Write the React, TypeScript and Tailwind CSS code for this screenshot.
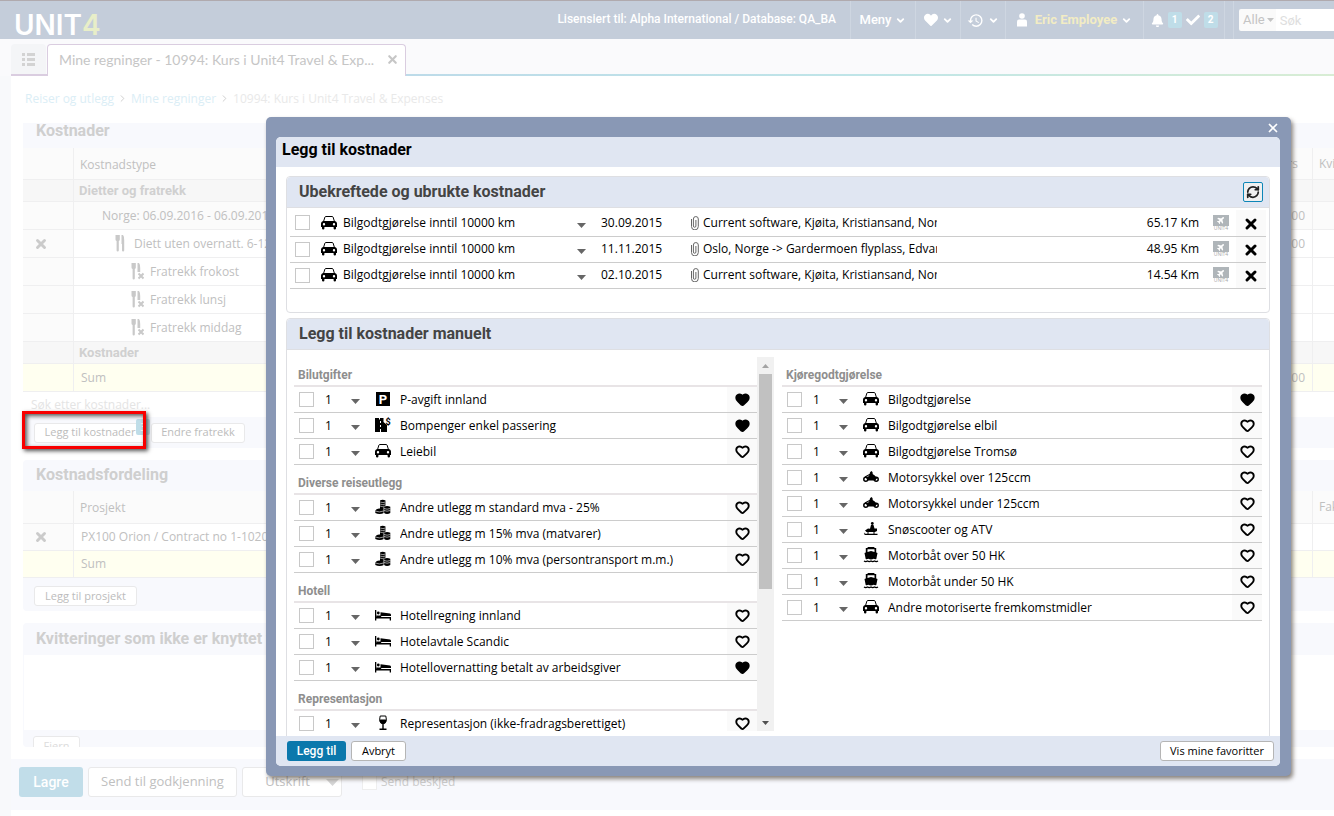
import React from 'react';
import { FaBell, FaCheck, FaHeart, FaPlane } from 'react-icons/fa';
import { MdHistory } from 'react-icons/md';
import { ChevronDown, ChevronRight, Heart, RefreshCw, X } from 'lucide-react';

type IconName = 'car' | 'parking' | 'toll' | 'coins' | 'bed' | 'glass' | 'motorcycle' | 'snow' | 'boat';

type Cost = { name: string; icon: IconName; favorite?: boolean };
type CostGroup = { title: string; items: Cost[] };

const unconfirmed = [
    { type: 'Bilgodtgjørelse inntil 10000 km', date: '30.09.2015', text: 'Current software, Kjøita, Kristiansand, Norge', amount: '65.17 Km' },
    { type: 'Bilgodtgjørelse inntil 10000 km', date: '11.11.2015', text: 'Oslo, Norge -> Gardermoen flyplass, Edvard Munchs veg', amount: '48.95 Km' },
    { type: 'Bilgodtgjørelse inntil 10000 km', date: '02.10.2015', text: 'Current software, Kjøita, Kristiansand, Norge', amount: '14.54 Km' },
];

const leftGroups: CostGroup[] = [
    {
        title: 'Bilutgifter',
        items: [
            { name: 'P-avgift innland', icon: 'parking', favorite: true },
            { name: 'Bompenger enkel passering', icon: 'toll', favorite: true },
            { name: 'Leiebil', icon: 'car' },
        ],
    },
    {
        title: 'Diverse reiseutlegg',
        items: [
            { name: 'Andre utlegg m standard mva - 25%', icon: 'coins' },
            { name: 'Andre utlegg m 15% mva (matvarer)', icon: 'coins' },
            { name: 'Andre utlegg m 10% mva (persontransport m.m.)', icon: 'coins' },
        ],
    },
    {
        title: 'Hotell',
        items: [
            { name: 'Hotellregning innland', icon: 'bed' },
            { name: 'Hotelavtale Scandic', icon: 'bed' },
            { name: 'Hotellovernatting betalt av arbeidsgiver', icon: 'bed', favorite: true },
        ],
    },
    {
        title: 'Representasjon',
        items: [{ name: 'Representasjon (ikke-fradragsberettiget)', icon: 'glass' }],
    },
];

const rightGroups: CostGroup[] = [
    {
        title: 'Kjøregodtgjørelse',
        items: [
            { name: 'Bilgodtgjørelse', icon: 'car', favorite: true },
            { name: 'Bilgodtgjørelse elbil', icon: 'car' },
            { name: 'Bilgodtgjørelse Tromsø', icon: 'car' },
            { name: 'Motorsykkel over 125ccm', icon: 'motorcycle' },
            { name: 'Motorsykkel under 125ccm', icon: 'motorcycle' },
            { name: 'Snøscooter og ATV', icon: 'snow' },
            { name: 'Motorbåt over 50 HK', icon: 'boat' },
            { name: 'Motorbåt under 50 HK', icon: 'boat' },
            { name: 'Andre motoriserte fremkomstmidler', icon: 'car' },
        ],
    },
];

function CostIcon({ name }: { name: IconName }) {
    return (
        <svg viewBox="0 0 16 16" className="size-4 shrink-0" fill="currentColor" aria-hidden="true">
            {name === 'car' && (
                <>
                    <path d="M2.400 7 3.900 2.100Q4.200 1.500 5 1.500h6q.8 0 1.100.6L13.600 7" fill="none" stroke="currentColor" />
                    <path fillRule="evenodd" d="M2 6h12q2 .6 2 2.400v3.600h-1v1.500q0 1-1.200 1T12.600 13.500V12H3.400v1.500q0 1-1.200 1T1 13.500V12H0V8.400Q0 6.600 2 6ZM3 8a1.200 1.200 0 1 0 0 2.400A1.200 1.200 0 0 0 3 8Zm10 0a1.200 1.200 0 1 0 0 2.400A1.200 1.200 0 0 0 13 8Z" />
                </>
            )}
            {name === 'parking' && (
                <>
                    <rect x="1" y="1" width="14" height="14" />
                    <text x="8" y="12.500" textAnchor="middle" fill="#fff" fontSize="13" fontWeight="700" fontFamily="Roboto, sans-serif">P</text>
                </>
            )}
            {name === 'toll' && (
                <>
                    <path d="M0 1h4v1.500h1V1h3.500v4L12 8v7H6v-3H5v3H0ZM5 4v2h1V4Zm0 4v2h1V8Z" fillRule="evenodd" />
                    <text x="13" y="8" textAnchor="middle" fontSize="9" fontWeight="700" fontFamily="Roboto, sans-serif">$</text>
                </>
            )}
            {name === 'coins' && (
                <>
                    <path d="M5 1.500q2.500-1.500 5.500 0v5L9 8v6Q4.500 16 .3 14v-2.500Q2 9 5 9.500Z" />
                    <path d="M9 7.800q3-1.600 6.300 0V14q-3.300 1.800-6.300 0Z" />
                    <path d="M5 3q3 1.200 5.500 0M5 5q2.500 1.200 5.500 0M5 7q2.500 1.200 4.500 0M.3 12q4 1.800 8.300 0M9 9.500q3 1.400 6.300 0M9 11.500q3 1.400 6.300 0M8.800 8v7" stroke="#fff" strokeWidth=".6" fill="none" />
                </>
            )}
            {name === 'bed' && (
                <>
                    <path d="M0 3h1.300v7H16v3.500h-1.300v-2H1.300v2H0ZM5.500 5.200 15 6.500q1 .3 1 1.500v1H5.500Z" />
                    <path d="M1.200 8.500h5v1.500h-5z" />
                    <circle cx="3.300" cy="6" r="1.400" />
                </>
            )}
            {name === 'glass' && (
                <>
                    <path d="M5.200 1h5.600q1.200 4-.1 6-1 1.500-2.700 1.500T5.300 7Q4 5 5.200 1Z" fill="none" stroke="currentColor" />
                    <path d="M4.500 4.500h7Q11.500 9 8 9T4.500 4.500ZM7.300 8h1.400v6H7.300ZM4.500 13.500h7V15h-7Z" />
                </>
            )}
            {name === 'motorcycle' && (
                <>
                    <path d="M7 3.500 8.200 2 9.500 3l.3 2.500 1.800 1 .4 1.500 1.500 1-1 2.500H4.500L3 8.500l3-1.500Z" />
                    <path d="M2 8 6.500 5.500 10 6l4 3.500" stroke="currentColor" strokeWidth="1.200" fill="none" />
                    <circle cx="2.800" cy="10.300" r="2" fill="none" stroke="currentColor" strokeWidth="1.500" />
                    <circle cx="13.200" cy="10.300" r="2" fill="none" stroke="currentColor" strokeWidth="1.500" />
                </>
            )}
            {name === 'snow' && (
                <>
                    <circle cx="9.300" cy="2.500" r="1.400" />
                    <path d="M8 4h2.500l1 3.500h2.500V10l-2 1H3.500L2 9.500 5 7.500l2 .3Z" />
                    <path d="M1 11.200q0 1.500 2 1.500h11.500V14H3Q.5 14 1 11.200Z" />
                    <path d="M5 10.500v2.500M11 10.500v2.500" stroke="currentColor" />
                </>
            )}
            {name === 'boat' && (
                <>
                    <path fillRule="evenodd" d="M5 0h6l.8 1h1.400v4.500l1.300.5-1.200 6q-1.300.6-2.600-.2-2.700 1.400-5.400 0-1.300.8-2.600.2L1.500 6l1.300-.5V1h1.400ZM4.500 2.200V5L8 4l3.500 1V2.200Z" />
                    <path d="M1 14q1.700 1.200 3.500 0 1.700 1.200 3.500 0 1.700 1.200 3.500 0 1.700 1.200 3.500 0" fill="none" stroke="currentColor" strokeWidth="1.300" />
                </>
            )}
        </svg>
    );
}

function Caret({ className = 'w-[9px] h-[5px]' }: { className?: string }) {
    return (
        <svg viewBox="0 0 10 5" preserveAspectRatio="none" className={className} aria-hidden="true">
            <path d="M0 0h10L5 5Z" fill="currentColor" />
        </svg>
    );
}

function Checkbox({ label, className = 'border-[#c8c8c8]' }: { label: string; className?: string }) {
    return <input type="checkbox" aria-label={label} className={`block shrink-0 appearance-none size-[15px] border bg-white ${className}`} />;
}

function CostRow({ cost }: { cost: Cost }) {
    return (
        <li className="flex h-[26px] items-center border-b border-[#ccc] pl-[5px]">
            <Checkbox label={cost.name} />
            <div className="relative ml-2 flex h-full w-10 items-center">
                <select aria-label={`Antall ${cost.name}`} className="w-full appearance-none bg-transparent pl-[3px] outline-none">
                    <option>1</option>
                    <option>2</option>
                    <option>3</option>
                </select>
                <Caret className="pointer-events-none absolute right-[2px] bottom-2 h-[5px] w-[9px] text-[#666]" />
            </div>
            <span className="ml-[13px] flex w-4 justify-center pb-[2px]"><CostIcon name={cost.icon} /></span>
            <span className="ml-[9px] grow truncate">{cost.name}</span>
            <button aria-label={`Favoritt ${cost.name}`} className="flex h-full w-[30px] shrink-0 items-center justify-center bg-[#fafafa]">
                <Heart className="size-[15px]" strokeWidth={3} fill={cost.favorite ? 'currentColor' : 'none'} />
            </button>
        </li>
    );
}

function CostList({ groups }: { groups: CostGroup[] }) {
    return (
        <>
            {groups.map((group) => (
                <section key={group.title}>
                    <h3 className="flex h-[30px] items-center border-b-2 border-[#e8e4e6] pt-2 pl-1 font-['Roboto'] text-[12px] font-bold text-[#8e8e8e]">{group.title}</h3>
                    <ul>
                        {group.items.map((cost) => <CostRow key={cost.name} cost={cost} />)}
                    </ul>
                </section>
            ))}
        </>
    );
}

function TopBar() {
    const item = 'flex items-center justify-center gap-1 border-l border-[#ced6e1]';
    return (
        <header className="flex h-[39px] shrink-0 border-t border-[#b0aaae] bg-[#c4cdda] font-['Roboto'] text-[13px] text-white">
            <a href="#" className="flex items-center pt-[9px] pl-[14px] font-['Inter'] text-[28px] leading-none font-semibold">
                UNIT<span className="text-[#e8eec8]">4</span>
            </a>
            <p className="ml-auto pt-[9px] pr-[14px] text-[12px] leading-[18px] font-medium whitespace-nowrap">
                Lisensiert til: Alpha International / Database: QA_BA
            </p>
            <button className={`${item} w-[65px] font-medium`}>Meny <ChevronDown className="size-[11px]" strokeWidth={4} /></button>
            <button aria-label="Favoritter" className={`${item} w-[45px]`}><FaHeart className="size-[14px]" /><ChevronDown className="size-[11px]" strokeWidth={4} /></button>
            <button aria-label="Historikk" className={`${item} w-[45px]`}><MdHistory className="size-[17px]" /><ChevronDown className="size-[11px]" strokeWidth={4} /></button>
            <button className={`${item} w-[138px]`}>
                <svg viewBox="0 0 10 14" className="mr-1 h-[14px] w-[10px]" fill="currentColor"><circle cx="5" cy="3" r="2.800" /><path d="M0 13.500V8.500q0-2 2-2h6q2 0 2 2v5Z" /></svg>
                <span className="font-bold text-[#f2ecc4]">Eric Employee</span>
                <ChevronDown className="size-[11px]" strokeWidth={4} />
            </button>
            <div className={`${item} w-[81px]`}>
                <FaBell className="size-[13px]" />
                <span className="h-4 w-[14px] rounded-xs bg-[#bfdde8] text-center text-[10px] leading-4 font-bold">1</span>
                <FaCheck className="size-[14px]" />
                <span className="h-4 w-[14px] rounded-xs bg-[#bfdde8] text-center text-[10px] leading-4 font-bold">2</span>
            </div>
            <div className="w-[9px] border-l border-[#ced6e1]" />
            <div className="flex w-[101px] items-center border-l border-[#ced6e1] pl-[5px]">
                <button className="flex h-[22px] items-center gap-[2px] rounded-l-xs bg-[#fafafa] pr-[2px] pl-1 text-[#c4c4c4]">Alle<Caret className="h-1 w-[7px]" /></button>
                <input aria-label="Søk" placeholder="Søk" className="h-[22px] w-full min-w-0 bg-white pl-1 outline-none placeholder:text-[#dedede]" />
            </div>
        </header>
    );
}

function FoodIcon({ removed = false }: { removed?: boolean }) {
    return (
        <svg viewBox="0 0 13 17" className="h-[17px] w-[13px] shrink-0 text-[#c9c9c9]" fill="currentColor" aria-hidden="true">
            <path d="M.5 0h4.300v4.500q0 1.200-1 1.500v9.500q0 1-1.100 1t-1.100-1V6Q.5 5.700.5 4.500Z" />
            <path d={removed ? 'M6.500 0H8q1.200 1 1.200 5v4H6.500Z' : 'M6.500 0H8q1.200 1 1.200 5v10.500q0 1-1.100 1t-1.100-1V9h-.5Z'} />
            {removed && <path d="m7.500 10.500 5 5m0-5-5 5" stroke="currentColor" strokeWidth="2" />}
        </svg>
    );
}

const cell = 'border-b border-[#efeff0] p-0';
const smallButton = 'rounded-[3px] border border-[#e9e9ea] bg-white text-[11px] text-[#bcbcbc] whitespace-nowrap';
const pageHeading = "pl-[13px] font-['Roboto'] text-[16px] font-bold text-[#cfcfcf]";

type LineProps = {
    first?: React.ReactNode;
    children: React.ReactNode;
    amount?: React.ReactNode;
    last?: string;
    height?: string;
    bg?: string;
    lead?: string;
};

function Line({ first, children, amount, last, height = 'h-[28px]', bg = 'bg-white', lead = 'bg-[#fbfbfb]' }: LineProps) {
    return (
        <tr className={`${height} ${bg}`}>
            <td className={`${cell} border-r ${lead}`}>{first}</td>
            <td className={`${cell} border-r whitespace-nowrap`}>{children}</td>
            <td className={`${cell} border-r pr-[7px] text-right`}>{amount}</td>
            <td className={`${cell} overflow-hidden pl-[6px] whitespace-nowrap`}>{last}</td>
        </tr>
    );
}

function Cols() {
    return (
        <colgroup>
            <col className="w-[51px]" />
            <col />
            <col className="w-[60px]" />
            <col className="w-[21px]" />
        </colgroup>
    );
}

const removeIcon = <X className="ml-[11px] size-[14px] text-[#cbcbcb]" strokeWidth={5} />;
const crumbIcon = <ChevronRight className="size-[11px] text-[#ccc]" strokeWidth={2} />;

function ExpensePage() {
    return (
        <main className="ml-[11px] flex grow flex-col bg-white text-[12px] text-[#c0c0c0]">
            <nav className="flex h-[47px] items-center gap-[3px] pb-[2px] pl-[14px] text-[#dbeef6]">
                <a href="#">Reiser og utlegg</a>
                {crumbIcon}
                <a href="#">Mine regninger</a>
                {crumbIcon}
                <span className="text-[#e9e9e9]">10994: Kurs i Unit4 Travel &amp; Expenses</span>
            </nav>
            <section className="ml-3 bg-[#f8f9fd]">
                <h2 className={`h-[25px] leading-[16px] ${pageHeading}`}>Kostnader</h2>
                <table className="w-full table-fixed border-separate border-spacing-0">
                    <Cols />
                    <tbody>
                        <Line height="h-[32px]" bg="bg-[#fbfbfb]" amount={<span className="pr-[7px]">Kurs</span>} last="Kvittering"><span className="block pt-[2px] pl-[6px]">Kostnadstype</span></Line>
                        <Line height="h-[22px]" bg="bg-[#f7f7f7]" lead=""><b className="pl-[5px] font-['Roboto'] text-[13px] text-[#d0d0d0]">Dietter og fratrekk</b></Line>
                        <Line bg="bg-[#fbfbfb]" amount="0.00"><span className="pl-7">Norge: 06.09.2016 - 06.09.2016</span></Line>
                        <Line first={removeIcon} amount="0.00"><span className="flex items-center gap-[6px] pl-[41px]"><FoodIcon />Diett uten overnatt. 6-12 t</span></Line>
                        <Line><span className="flex items-center gap-[6px] pl-[57px]"><FoodIcon removed />Fratrekk frokost</span></Line>
                        <Line><span className="flex items-center gap-[6px] pl-[57px]"><FoodIcon removed />Fratrekk lunsj</span></Line>
                        <Line><span className="flex items-center gap-[6px] pl-[57px]"><FoodIcon removed />Fratrekk middag</span></Line>
                        <Line height="h-[22px]" bg="bg-[#f7f7f7]" lead=""><b className="pl-[5px] font-['Roboto'] text-[13px] text-[#d0d0d0]">Kostnader</b></Line>
                        <Line bg="bg-[#fffff0]" lead="" amount="0.00"><span className="pl-[7px]">Sum</span></Line>
                    </tbody>
                </table>
                <input aria-label="Søk etter kostnader" placeholder="Søk etter kostnader..." className="block h-[25px] w-full bg-white pl-2 outline-none placeholder:text-[#e4e4e4]" />
                <div className="flex h-[31px] items-center gap-[5px] pl-[11px]">
                    <div className="relative">
                        <button className={`${smallButton} block h-5 w-[112px]`}>Legg til kostnader</button>
                        <span className="absolute -top-1 -right-1 h-4 w-[14px] rounded-xs bg-[#bfdde8] text-center text-[10px] leading-4 text-white">3</span>
                        <div className="pointer-events-none absolute -top-3 -left-3 h-[38px] w-[124px] border-[3px] border-[#f80000] shadow-[2px_2px_4px_#555,inset_2px_2px_4px_#555]" />
                    </div>
                    <button className={`${smallButton} h-5 w-[94px]`}>Endre fratrekk</button>
                </div>
            </section>
            <section className="mt-3 ml-3 rounded-l-sm bg-[#f8f9fd]">
                <h2 className={`h-[31px] leading-[30px] ${pageHeading}`}>Kostnadsfordeling</h2>
                <table className="w-full table-fixed border-separate border-spacing-0">
                    <Cols />
                    <tbody>
                        <Line height="h-[33px]" bg="bg-[#fbfbfb]" last="Faktor"><span className="block pt-[2px] pl-[6px]">Prosjekt</span></Line>
                        <Line height="h-[27px]" first={removeIcon}><span className="pl-[7px]">PX100 Orion / Contract no 1-1020</span></Line>
                        <Line height="h-[27px]" bg="bg-[#fffff0]" lead=""><span className="pl-[7px]">Sum</span></Line>
                    </tbody>
                </table>
                <div className="h-[33px] pt-2 pl-[11px]">
                    <button className={`${smallButton} block h-5 w-[103px]`}>Legg til prosjekt</button>
                </div>
            </section>
            <section className="mt-3 ml-3 h-[124px] overflow-hidden rounded-l-sm bg-[#f8f9fd]">
                <h2 className={`h-[32px] leading-[31px] ${pageHeading}`}>Kvitteringer som ikke er knyttet til en kostnad</h2>
                <div className="ml-px h-[75px] bg-white" />
                <div className="pt-[6px] pl-[10px]">
                    <button className={`${smallButton} block h-5 w-[47px] text-[#dcdcdc]`}>Fjern</button>
                </div>
            </section>
            <footer className="mt-3 mb-[6px] flex h-[51px] items-start gap-[5px] bg-[#f8f9fd] pt-2 pl-2 text-[13px]">
                <button className="h-[30px] w-[64px] rounded-[3px] bg-[#c1dde9] font-['Roboto'] text-[14px] font-medium text-white">Lagre</button>
                <button className="h-[30px] w-[149px] rounded-[3px] border border-[#e9e9ea] bg-white">Send til godkjenning</button>
                <button className="flex h-[30px] w-[100px] items-center justify-end gap-4 rounded-[3px] border border-[#e9e9ea] bg-white pr-[2px]">Utskrift<Caret className="h-[7px] w-[13px] text-[#d5d5d5]" /></button>
                <label className="ml-[15px] flex h-[30px] items-center gap-1 text-[12px] text-[#ccc]"><Checkbox label="Send beskjed" className="border-[#eee]" />Send beskjed</label>
            </footer>
        </main>
    );
}

function AddCostsDialog() {
    return (
        <div role="dialog" aria-labelledby="dialog-title" className="absolute top-[117px] right-[43px] left-[266px] flex h-[659px] flex-col rounded-[5px] bg-[#8998b5] pr-[11px] pb-[10px] pl-[10px] text-[12px] text-black shadow-[2px_3px_4px_rgba(80,70,60,0.65)]">
            <div className="flex h-5 shrink-0 items-center justify-end">
                <button aria-label="Lukk" className="pt-px text-white"><X className="size-[14px]" strokeWidth={3} /></button>
            </div>
            <div className="flex grow flex-col overflow-hidden rounded-[5px] bg-white">
                <h1 id="dialog-title" className="h-[30px] shrink-0 bg-[#e0e6f2] pl-[6px] font-['Roboto'] text-[16px] leading-[25px] font-bold">Legg til kostnader</h1>
                <div className="flex h-[569px] flex-col gap-[5px] overflow-hidden px-[10px] pt-[9px]">
                    <section className="h-[137px] shrink-0 rounded-[4px] border border-[#dedfe3]">
                        <div className="flex h-[31px] items-center justify-between rounded-t-[4px] border-b border-[#dedfe3] bg-[#e0e6f2] pr-[6px] pl-3">
                            <h2 className="pb-px font-['Roboto'] text-[16px] leading-none font-bold text-[#444]">Ubekreftede og ubrukte kostnader</h2>
                            <button aria-label="Oppdater" className="flex size-5 items-center justify-center rounded-xs border border-[#0d86b8] bg-[#f0f0f0] text-[#222]"><RefreshCw className="size-[14px]" strokeWidth={3} /></button>
                        </div>
                        <div className="px-[3px] pt-[2px]">
                            <table className="w-full table-fixed border-collapse">
                                <colgroup>
                                    <col className="w-[26px]" />
                                    <col className="w-[276px]" />
                                    <col className="w-[85px]" />
                                    <col className="w-[261px]" />
                                    <col />
                                    <col className="w-[37px]" />
                                    <col className="w-[30px]" />
                                </colgroup>
                                <tbody>
                                    {unconfirmed.map((row) => (
                                        <tr key={row.date} className="h-[26px] border-b border-[#ccc]">
                                            <td className="p-0 pl-[5px]"><Checkbox label={`Velg ${row.date}`} /></td>
                                            <td className="p-0 pl-[5px]">
                                                <div className="relative flex items-center gap-[6px]">
                                                    <CostIcon name="car" />
                                                    <select aria-label="Kostnadstype" className="w-[244px] appearance-none bg-transparent outline-none"><option>{row.type}</option></select>
                                                    <Caret className="pointer-events-none absolute right-[6px] bottom-1 h-[5px] w-[9px] text-[#666]" />
                                                </div>
                                            </td>
                                            <td className="p-0 pl-[9px]">{row.date}</td>
                                            <td className="p-0 pl-[14px]">
                                                <div className="flex items-center gap-1">
                                                    <svg viewBox="0 0 8 14" className="h-[14px] w-2 shrink-0" fill="none" stroke="#666"><path d="M.5 3v7.500a3.300 3.300 0 0 0 6.800 0V3a2.400 2.400 0 0 0-4.900 0v7a1.200 1.200 0 0 0 2.500 0V4" /></svg>
                                                    <span className="w-[234px] overflow-hidden whitespace-nowrap">{row.text}</span>
                                                </div>
                                            </td>
                                            <td className="p-0 text-right">{row.amount}</td>
                                            <td className="p-0 pl-[14px]">
                                                <div className="flex h-[11px] w-4 items-center justify-center bg-[#afb5b9] text-white"><FaPlane className="size-2 -rotate-45" /></div>
                                                <p className="w-4 text-center text-[5px] leading-[5px] text-[#a8a8a8]">UNIT4</p>
                                            </td>
                                            <td className="bg-[#fafafa] p-0"><button aria-label="Slett" className="flex w-full justify-center pt-[2px]"><X className="size-4" strokeWidth={4.5} /></button></td>
                                        </tr>
                                    ))}
                                </tbody>
                            </table>
                        </div>
                    </section>
                    <section className="shrink-0 rounded-t-[4px] border border-[#dedfe3]">
                        <h2 className="h-[31px] rounded-t-[4px] border-b border-[#dedfe3] bg-[#e0e6f2] pl-3 font-['Roboto'] text-[16px] leading-[29px] font-bold text-[#444]">Legg til kostnader manuelt</h2>
                        <div className="flex gap-2 p-[7px]">
                            <div className="flex h-[374px] flex-1">
                                <div className="grow overflow-hidden"><CostList groups={leftGroups} /></div>
                                <div className="flex w-[17px] flex-col items-center bg-[#f1f1f1] text-[#505050]">
                                    <span className="flex h-[17px] items-center"><Caret className="h-1 w-[7px] rotate-180 text-[#a3a3a3]" /></span>
                                    <div className="h-[215px] w-[13px] bg-[#c1c1c1]" />
                                    <span className="mt-auto flex h-[17px] items-center"><Caret className="h-1 w-[7px]" /></span>
                                </div>
                            </div>
                            <div className="flex-1"><CostList groups={rightGroups} /></div>
                        </div>
                    </section>
                </div>
                <div className="flex grow items-center gap-[5px] bg-[#e0e6f2] pr-[6px] pl-[11px] text-[11px]">
                    <button className="h-5 w-[59px] rounded-[3px] bg-[#0b78ac] font-['Roboto'] text-[12px] font-medium text-white">Legg til</button>
                    <button className="h-5 w-[55px] rounded-[3px] border border-[#b5b5b5] bg-white">Avbryt</button>
                    <button className="ml-auto h-5 w-[114px] rounded-[3px] border border-[#b5b5b5] bg-white">Vis mine favoritter</button>
                </div>
            </div>
        </div>
    );
}

export default function App() {
    return (
        <div className="relative flex min-h-screen flex-col overflow-hidden bg-[#f8f9fb] font-['Open_Sans',sans-serif]">
            <TopBar />
            <div className="flex h-[37px] shrink-0 bg-[#fafafc] pt-[5px] pl-[11px]">
                <button aria-label="Meny" className="flex w-[35px] items-center justify-center rounded-t-sm border-b-2 border-[#dacde0] bg-[#f4f5f7]">
                    <svg viewBox="0 0 13 13" className="size-[13px]" fill="#d3d3d3"><path d="M0 0h3v3H0ZM5 0h8v3H5ZM0 5h3v3H0ZM5 5h8v3H5ZM0 10h3v3H0ZM5 10h8v3H5Z" /></svg>
                </button>
                <div className="w-px self-end border-b-2 border-[#dacde0]" />
                <div className="flex w-[359px] items-center justify-between rounded-t-sm border border-b-0 border-[#dacde0] bg-white pr-[6px] pb-[3px] pl-[11px] font-['Lato'] text-[14px] text-[#c6c6c6]">
                    <span className="whitespace-nowrap">Mine regninger - 10994: Kurs i Unit4 Travel &amp; Exp...</span>
                    <button aria-label="Lukk fane"><X className="size-[13px]" strokeWidth={4} /></button>
                </div>
                <div className="h-[2px] grow self-end bg-linear-to-r from-[#bddbe9] via-[#bfe5e8] to-[#d8edd4]" />
            </div>
            <ExpensePage />
            <AddCostsDialog />
        </div>
    );
}
